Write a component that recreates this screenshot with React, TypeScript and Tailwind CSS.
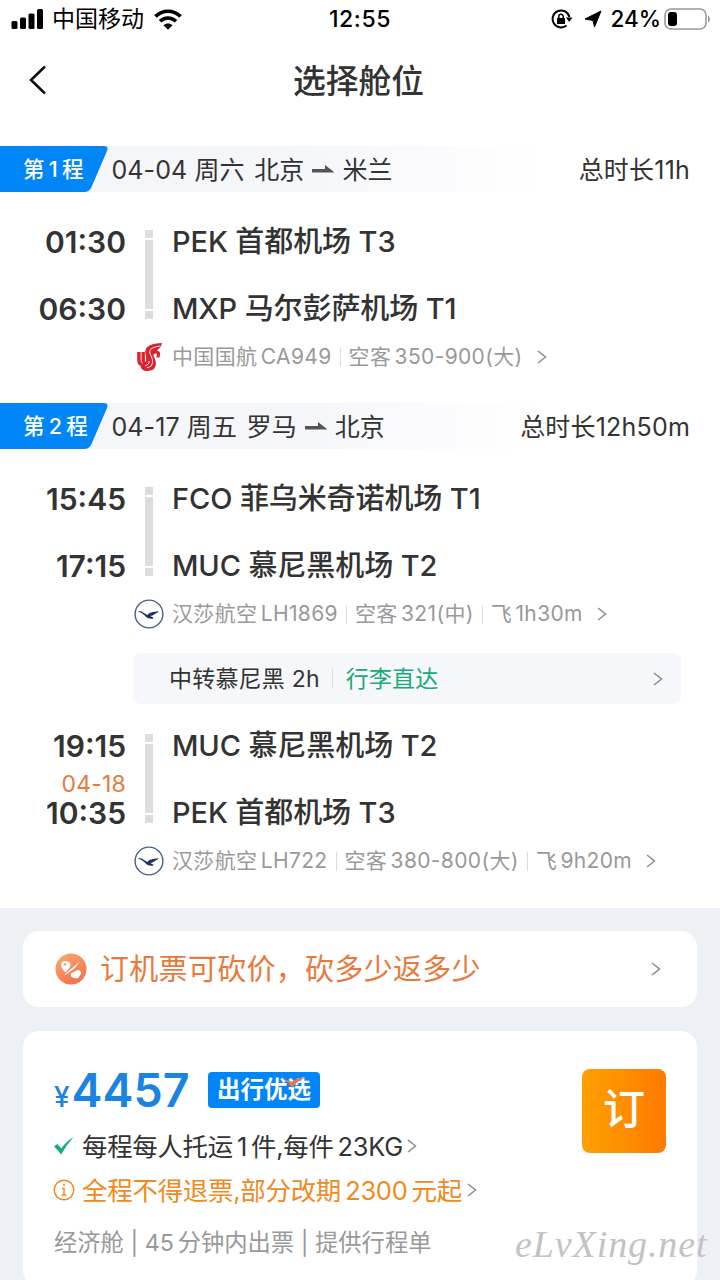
import React from 'react';

interface Stop {
    time: string;
    name: string;
}

interface LegData {
    from: Stop;
    to: Stop;
    nextDay?: string;
    airline: 'ca' | 'lh';
    info: string[];
}

const isHan = (ch?: string) => !!ch && /[\u4e00-\u9fff]/.test(ch);

// Latin runs get a little breathing room where they touch a Chinese character
const Mix: React.FC<{ text: string }> = ({ text }) => {
    const parts = text.split(/([A-Za-z0-9][A-Za-z0-9-]*)/);
    return (
        <>
            {parts.map((part, i) => {
                if (i % 2 === 0) return part;
                const left = isHan(parts[i - 1].slice(-1)) ? 'ml-[0.16em]' : '';
                const right = isHan(parts[i + 1][0]) ? 'mr-[0.16em]' : '';
                return <span key={i} className={`${left} ${right}`}>{part}</span>;
            })}
        </>
    );
};

const Chevron: React.FC<{ className?: string }> = ({ className = '' }) => (
    <svg viewBox="0 0 10 14" className={`w-[10px] h-[14px] shrink-0 ${className}`} fill="none" stroke="#8c8c8c" strokeWidth="1.5">
        <path d="M1 1l7.5 6L1 13" />
    </svg>
);

const AirChina = () => (
    <svg viewBox="0 0 30 30" className="w-[30px] h-[30px] shrink-0">
        <path d="M28 1C20 1.500 13 3 11.500 8c-.8 3 .6 5 .6 8v3.500h-1.200V10H3.200V18c0 3.500 1.300 5 3.300 5.800C7 27.500 9.500 29 13.500 29c6.500 0 8.900-4 8.300-9-.5-4-2.600-5.500-2.300-7.500 1.300-1.500 3.500-1 3.500.5 0 1-.5 1.500-1 2.500h3.300c1.800-4 .7-6.500-2.500-7.300C25.500 7 27.500 4.800 28 1z" fill="#d9232e" />
        <path d="M26.500 4C19.500 5 15.600 6.500 15.700 10c.1 3 2.900 5 2.900 9.500 0 3.500-2 5.800-5.800 6.300M15.200 19c0 2.500-1.500 4-4 4.700M7.100 10v8.500c0 1.500.6 2.300 1.600 2.500" fill="none" stroke="#fff" strokeWidth="0.900" />
    </svg>
);

const Lufthansa = () => (
    <svg viewBox="0 0 30 30" className="w-[30px] h-[30px] shrink-0">
        <circle cx="15" cy="15" r="13.900" fill="#fff" stroke="#4a5f86" strokeWidth="1.400" />
        <path d="M3.800 12.700c2-.8 4-.2 5.700 1l3.800 2.300c1.500-1.800 3-2.600 5.500-3l5.900-.8-1.200 1.500-1.500.4-.8 1.200-1.600.3-.9 1-2.400.4 3.200 1.800-.6.900c-3.300.5-6-.7-8.200-3.200-1.900-2.100-3.800-3.200-6.900-3.800z" fill="#1d2f66" />
    </svg>
);

const StatusBar = () => (
    <div className="h-[38px] grid grid-cols-[1fr_auto_1fr] items-center text-[22.500px] text-black font-medium">
        <div className="flex items-center pl-[11px]">
            <svg viewBox="0 0 33 20" className="w-[33px] h-5" fill="#000">
                <rect x="0.500" y="12" width="6" height="8" rx="1.500" />
                <rect x="9" y="8.500" width="6" height="11.500" rx="1.500" />
                <rect x="17.500" y="4.500" width="6" height="15.500" rx="1.500" />
                <rect x="26" y="0" width="6" height="20" rx="1.500" />
            </svg>
            <span className="ml-[8px] pt-px text-[23px] font-normal">中国移动</span>
            <svg viewBox="0 0 28 21" className="ml-[10px] w-[28px] h-[21px]" fill="none" stroke="#000" strokeWidth="3.600">
                <path d="M1.500 7.500c7-7 18-7 25 0" />
                <path d="M6 12.300c4.500-4.500 11.500-4.500 16 0" />
                <path d="M9.500 16.200c2.500-2.300 6.500-2.300 9 0L14 20.700z" fill="#000" stroke="none" />
            </svg>
        </div>
        <span className="text-[23px] tracking-[0.6px]">12:55</span>
        <div className="flex items-center justify-end pr-[9px]">
            <svg viewBox="0 0 22 20" className="w-[22px] h-5" fill="none" stroke="#000" strokeWidth="2">
                <path d="M15.500 16.500A8.500 8.500 0 1 1 18.400 8" />
                <path d="M15 8.500h6.500L18.200 13z" fill="#000" stroke="none" />
                <rect x="6" y="9" width="8" height="6" fill="#000" stroke="none" />
                <path d="M7.800 9.500V7.500a2.200 2.200 0 0 1 4.400 0v2" strokeWidth="1.500" />
            </svg>
            <svg viewBox="0 0 18 18" className="ml-[11px] w-[18px] h-[18px]" fill="#000" stroke="#000" strokeWidth="1" strokeLinejoin="round">
                <path d="M17 1L10.500 17 9 10.500 1 9z" />
            </svg>
            <span className="ml-[8px]">24%</span>
            <svg viewBox="0 0 47 22" className="ml-[3px] w-[47px] h-[22px]" fill="none">
                <rect x="1" y="1" width="41" height="20" rx="6" stroke="#999" strokeWidth="1.600" />
                <rect x="4" y="4" width="9" height="14" rx="3" fill="#000" />
                <path d="M44 7.500c2.500 1 2.500 6 0 7z" fill="#999" />
            </svg>
        </div>
    </div>
);

const SegmentHeader: React.FC<{ label: string; date: string; from: string; to: string; total: string }> = ({ label, date, from, to, total }) => (
    <div className="h-[46px] flex items-center pr-[30px] text-[25px] text-[#333] bg-linear-to-r from-[#f5f6fa] from-40% to-white to-75%">
        <div className="grid w-[108px] h-[46px] shrink-0 items-center">
            <svg viewBox="0 0 108 46" className="col-start-1 row-start-1 w-[108px] h-[46px]">
                <path d="M0 0H104Q109 0 107 5L91.500 41Q89.500 46 84 46H0z" fill="#0086f6" />
            </svg>
            <span className="col-start-1 row-start-1 pl-[23px] text-[21.500px] tracking-[0.8px] font-medium text-white"><Mix text={label} /></span>
        </div>
        <span className="ml-[3.500px] pt-1 tracking-[0.1px] whitespace-pre">{date}<span className="ml-[9.500px]">{from}</span></span>
        <svg viewBox="0 0 22 8" className="mx-[8px] w-[22px] h-2 shrink-0" fill="#555">
            <path d="M0 4H13V0L22.500 7.500H0z" />
        </svg>
        <span className="pt-1">{to}</span>
        <span className="ml-auto pt-1 tracking-[0.2px]">{total}</span>
    </div>
);

const Leg: React.FC<{ leg: LegData; className: string }> = ({ leg, className }) => (
    <div className={className}>
        <div className="flex h-[117px] text-[29px] font-medium text-[#333] leading-[50px]">
            <div className="w-[126px] text-right text-[30px] font-semibold">
                <div className="h-[50px]">{leg.from.time}</div>
                <div className="h-[17px] text-[23px] font-normal text-[#e8793a] leading-[27px] tracking-[0.2px]">{leg.nextDay}</div>
                <div className="h-[50px]">{leg.to.time}</div>
            </div>
            <div className="ml-[19px] mt-[13px] w-2 h-[89px] flex flex-col gap-[2px]">
                <div className="h-2 bg-[#ddd]" />
                <div className="flex-1 bg-[#ddd]" />
                <div className="h-2 bg-[#ddd]" />
            </div>
            <div className="ml-[19px] flex flex-col gap-[17px] tracking-[-0.1px]">
                <div>{leg.from.name}</div>
                <div>{leg.to.name}</div>
            </div>
        </div>
        <div className="mt-2 h-[30px] pl-[134px] flex items-center text-[21px] text-[#999]">
            {leg.airline === 'ca' ? <AirChina /> : <Lufthansa />}
            <div className="ml-2 flex items-center tracking-[0.35px]">
                {leg.info.map((item, i) => (
                    <React.Fragment key={item}>
                        {i > 0 && <span className="mx-2 w-px h-[19px] bg-[#ddd]" />}
                        <span><Mix text={item} /></span>
                    </React.Fragment>
                ))}
            </div>
            <Chevron className="ml-[14px]" />
        </div>
    </div>
);

const legs: LegData[] = [
    { from: { time: '01:30', name: 'PEK 首都机场 T3' }, to: { time: '06:30', name: 'MXP 马尔彭萨机场 T1' }, airline: 'ca', info: ['中国国航CA949', '空客350-900(大)'] },
    { from: { time: '15:45', name: 'FCO 菲乌米奇诺机场 T1' }, to: { time: '17:15', name: 'MUC 慕尼黑机场 T2' }, airline: 'lh', info: ['汉莎航空LH1869', '空客321(中)', '飞1h30m'] },
    { from: { time: '19:15', name: 'MUC 慕尼黑机场 T2' }, to: { time: '10:35', name: 'PEK 首都机场 T3' }, nextDay: '04-18', airline: 'lh', info: ['汉莎航空LH722', '空客380-800(大)', '飞9h20m'] },
];

const App: React.FC = () => {
    return (
        <div className="relative w-[720px] h-[1280px] overflow-hidden bg-[#edf1f6] font-[Inter,'Noto_Sans_CJK_SC',sans-serif] whitespace-nowrap">
            <div className="h-[908px] bg-white">
                <StatusBar />
                <div className="h-[108px] pb-[24px] grid grid-cols-[1fr_auto_1fr] items-center">
                    <svg viewBox="0 0 18 30" className="ml-[29px] w-[18px] h-[30px]" fill="none" stroke="#111" strokeWidth="2.600">
                        <path d="M16 1.500L2 15l14 13.500" />
                    </svg>
                    <h1 className="pt-[3px] mr-[3px] text-[32.800px] font-medium text-[#333]">选择舱位</h1>
                </div>

                <SegmentHeader label="第1程" date="04-04 周六" from="北京" to="米兰" total="总时长11h" />
                <Leg leg={legs[0]} className="pt-[25px] pb-[31px]" />

                <SegmentHeader label="第2程" date="04-17 周五" from="罗马" to="北京" total="总时长12h50m" />
                <Leg leg={legs[1]} className="pt-[25px] pb-6" />
                <div className="ml-[133px] mr-[39px] h-[51px] rounded-lg bg-[#f5f7fb] flex items-center pl-9 pr-[18px] text-[23px] tracking-[0.2px] text-[#333]">
                    <span className="pt-0.5">中转慕尼黑 2h</span>
                    <span className="mx-[12.500px] w-px h-[19px] bg-[#ddd]" />
                    <span className="pt-0.5 text-[#1aab74]">行李直达</span>
                    <Chevron className="ml-auto" />
                </div>
                <Leg leg={legs[2]} className="pt-[17px]" />
            </div>

            <div className="mt-[23px] mx-[23px] h-[76px] rounded-2xl bg-white flex items-center pl-8 pr-9">
                <svg viewBox="0 0 32 32" className="w-8 h-8">
                    <defs>
                        <linearGradient id="bargain" x1="0" y1="0" x2="0.500" y2="1">
                            <stop offset="0" stopColor="#f9ad6c" />
                            <stop offset="1" stopColor="#f47350" />
                        </linearGradient>
                    </defs>
                    <circle cx="16" cy="16" r="15.500" fill="url(#bargain)" />
                    <path d="M6.500 9.500Q8 7.500 11 8q4.500.5 4.500 4 0 2-5 7.500Q5 15 6.500 9.500z" fill="#fff" />
                    <circle cx="10" cy="11.500" r="1.200" fill="#f69a62" />
                    <path d="M8 23L24.500 8.500 20.500 14.500 12.500 20.500z" fill="#fff" />
                    <path d="M16 20.500L22.500 17q1.500-.5 2.500 1l1.500 2-3 4.500q-1 1.300-3 .8l-3-.8q-2.500-1.500-1.500-4z" fill="#fff" />
                </svg>
                <span className="ml-[13px] pt-[2px] text-[29px] tracking-[0.300px] text-[#e8793a]">订机票可砍价，砍多少返多少</span>
                <Chevron className="ml-auto" />
            </div>

            <div className="mt-6 mx-[23px] h-[255px] rounded-2xl bg-white flex justify-between pl-[31px] pr-[31px]">
                <div className="pt-[31px]">
                    <div className="h-[56px] flex items-center">
                        <span className="pt-[6px] w-[135px] text-[#1b83e2] font-semibold text-[46.500px] leading-[56px]"><span className="mr-[2px] text-[28px] font-medium">¥</span>4457</span>
                        <div className="relative ml-[19px] w-[112px] h-9 rounded bg-[#0086f6] flex items-center justify-center text-[23.500px] font-bold text-white">
                            出行优选
                            <svg viewBox="0 0 24 12" className="absolute left-[74px] top-[5px] w-6 h-3">
                                <path d="M0 2q5 0 9 3 5-4 15-5Q14 5 10 11 7 5 0 2z" fill="#e5794a" />
                            </svg>
                        </div>
                    </div>
                    <div className="mt-[6px] h-11 flex items-center text-[25.400px] text-[#333]">
                        <svg viewBox="0 0 20 18" className="w-5 h-[18px]" fill="#12b076">
                            <path d="M0 9.500L3.300 7l4 4.500Q12 4.500 19.500 0 12.500 8 7 17.500 4 13 0 9.500z" />
                        </svg>
                        <span className="ml-2 pt-0.5 tracking-[-0.25px]"><Mix text="每程每人托运1件,每件23KG" /></span>
                        <Chevron className="ml-[4px]" />
                    </div>
                    <div className="h-11 flex items-center text-[25.500px] text-[#ef8a1d]">
                        <svg viewBox="0 0 22 22" className="-ml-px w-[22px] h-[22px]" fill="none" stroke="#ef8a1d" strokeWidth="1.500">
                            <circle cx="11" cy="11" r="9.800" />
                            <path d="M9 9.500h2V16M8.500 16h5M11 5v2" />
                        </svg>
                        <span className="ml-[7px] pt-0.5 tracking-[-0.3px]"><Mix text="全程不得退票,部分改期2300元起" /></span>
                        <Chevron className="ml-[5px]" />
                    </div>
                    <div className="mt-2 h-11 flex items-center text-[23.300px] text-[#999]">
                        <span className="pt-0.5"><Mix text="经济舱 | 45分钟内出票 | 提供行程单" /></span>
                    </div>
                </div>
                <button className="mt-[38px] pb-1.5 w-[84px] h-[84px] rounded-lg bg-linear-to-r from-[#ffa000] to-[#ff7a00] text-[42px] font-medium text-white">订</button>
            </div>

            <div className="absolute left-[515px] top-[1219px] text-[38px] leading-[50px] italic text-[#c3c3c3] font-['Liberation_Serif',serif] tracking-[0.9px]">eLvXing.net</div>
        </div>
    );
};

export default App;
